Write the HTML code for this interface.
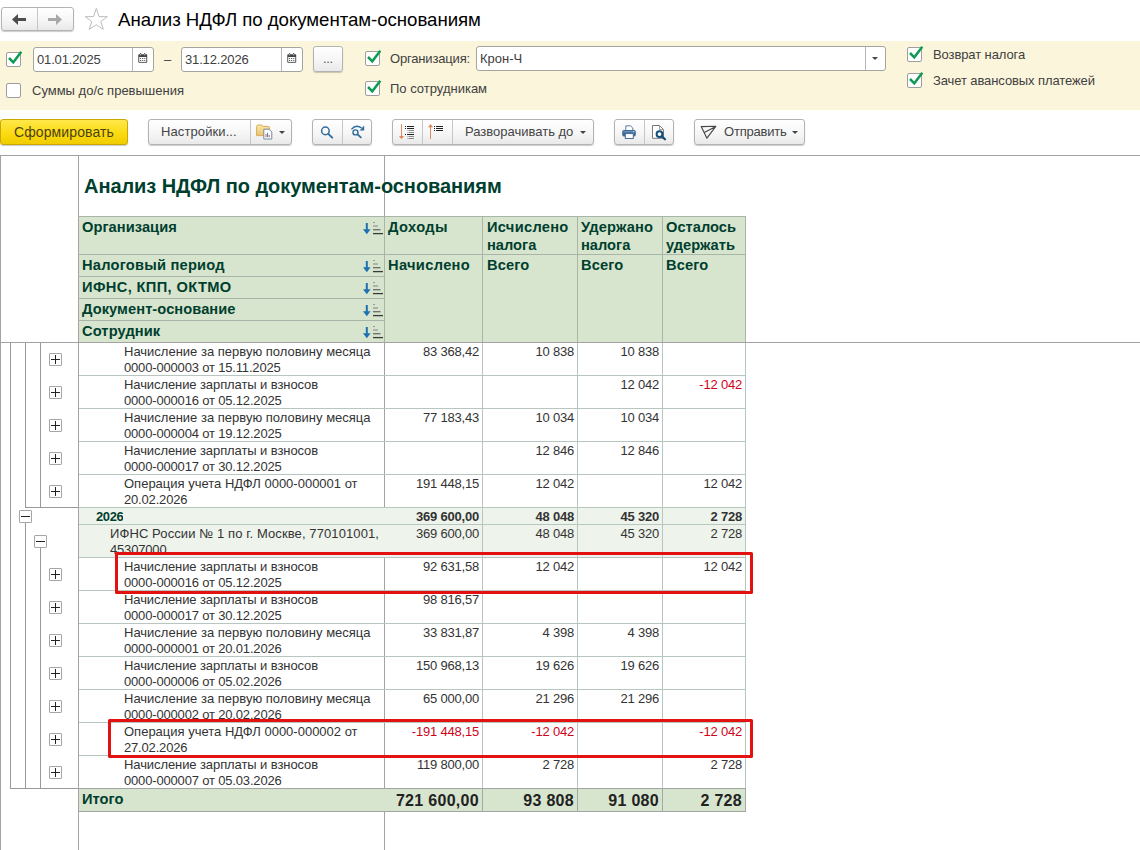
<!DOCTYPE html>
<html><head><meta charset="utf-8">
<style>
*{box-sizing:border-box;margin:0;padding:0}
html,body{width:1140px;height:850px;overflow:hidden;background:#fff}
body{font-family:"Liberation Sans",sans-serif;font-size:13px;color:#404040;position:relative}
.a{position:absolute}
.t{position:absolute;white-space:nowrap;line-height:16px}
.btn{position:absolute;border:1px solid #b3b3b3;border-radius:3px;background:linear-gradient(#ffffff,#f6f6f6 55%,#e9e9e9);box-shadow:0 1px 1px rgba(0,0,0,.2)}
.sep{position:absolute;width:1px;background:#c6c6c6}
.inp{position:absolute;border:1px solid #a5a5a0;border-radius:3px;background:#fff}
.cb{position:absolute;width:15px;height:15px;border:1px solid #9e9e9e;border-radius:2px;background:#fff}
.ck{position:absolute;width:18px;height:20px;overflow:visible}
.dd{position:absolute;width:0;height:0;border-left:3px solid transparent;border-right:3px solid transparent;border-top:3px solid #444}
.vl{position:absolute;width:1px;background:#a3a3a3}
.hl{position:absolute;height:1px;background:#a3a3a3}
.gl{position:absolute;background:#b7c7c0}
.hd{position:absolute;font-weight:bold;font-size:14.67px;line-height:18px;color:#003f2f;white-space:nowrap}
.d{position:absolute;left:124px;line-height:16px;white-space:nowrap;color:#333}
.n{position:absolute;text-align:right;line-height:16px;white-space:nowrap;color:#333;letter-spacing:-.2px}
.r{color:#d0021b}
.ls{letter-spacing:-.17px}
.pm{position:absolute;width:13px;height:13px;border:1px solid #a6a6a6;border-radius:1px;background:#fff}
.pm:before{content:"";position:absolute;left:1px;top:5px;width:9px;height:1px;background:#222}
.pl:after{content:"";position:absolute;left:5px;top:1px;width:1px;height:9px;background:#222}
.red{position:absolute;border:3px solid #e31110;border-radius:1.5px}
</style></head><body>
<!-- ===== top nav ===== -->
<div class="btn" style="left:1px;top:7px;width:73px;height:24px"></div>
<div class="sep" style="left:37px;top:8px;height:22px"></div>
<svg class="a" style="left:10px;top:12px" width="18" height="15" viewBox="0 0 18 15"><path d="M2 7.5 L8 2 V6 H16 V9 H8 V13 Z" fill="#4d4d4d"/></svg>
<svg class="a" style="left:46px;top:12px" width="18" height="15" viewBox="0 0 18 15"><path d="M16 7.5 L10 2 V6 H2 V9 H10 V13 Z" fill="#a8a8a8"/></svg>
<svg class="a" style="left:83px;top:7px" width="26" height="25" viewBox="0 0 26 25"><path d="M13.3 1.4 L16 9.6 L24.3 9.7 L17.8 14.6 L20.3 22.3 L13.3 17.8 L6.3 22.3 L8.8 14.6 L2.3 9.7 L10.6 9.6 Z" fill="#fff" stroke="#bcbcbc" stroke-width="1" stroke-linejoin="miter"/></svg>
<div class="t" style="left:118px;top:9px;font-size:18.67px;line-height:22px;color:#000;letter-spacing:-.05px">Анализ НДФЛ по документам-основаниям</div>

<!-- ===== yellow panel ===== -->
<div class="a" style="left:0;top:41px;width:1140px;height:69px;background:#fbf6db"></div>

<div class="cb" style="left:6px;top:52px"></div>
<svg class="ck" style="left:6px;top:48px"><path d="M3 10 L7.3 14.3 L15.3 3.7" fill="none" stroke="#0f9a55" stroke-width="2.5"/></svg>
<div class="inp" style="left:33px;top:47px;width:121px;height:25px"></div>
<div class="sep" style="left:132px;top:48px;height:23px;background:#b5b5b5"></div>
<div class="t" style="left:37px;top:52px;letter-spacing:-.15px">01.01.2025</div>
<svg class="a" style="left:138px;top:53px" width="10" height="10"><path d="M0.3 2 Q0.3 1.2 1.1 1.2 H8.4 Q9.2 1.2 9.2 2 V9 Q9.2 9.8 8.4 9.8 H1.1 Q0.3 9.8 0.3 9 Z" fill="#444"/><rect x="1.2" y="4" width="7.1" height="4.9" fill="#fff"/><rect x="2.1" y="0" width="1" height="2.2" fill="#444"/><rect x="6.2" y="0" width="1" height="2.2" fill="#444"/><rect x="2.2" y="1.3" width=".8" height="1" fill="#fff"/><rect x="6.3" y="1.3" width=".8" height="1" fill="#fff"/>
<rect x="2.1" y="5" width="1" height="1" fill="#444"/><rect x="4.2" y="5" width="1" height="1" fill="#444"/><rect x="6.3" y="5" width="1" height="1" fill="#444"/><rect x="2.1" y="7" width="1" height="1" fill="#444"/><rect x="4.2" y="7" width="1" height="1" fill="#444"/><rect x="6.3" y="7" width="1" height="1" fill="#444"/></svg>
<div class="t" style="left:164px;top:52px">–</div>
<div class="inp" style="left:181px;top:47px;width:122px;height:25px"></div>
<div class="sep" style="left:281px;top:48px;height:23px;background:#b5b5b5"></div>
<div class="t" style="left:185px;top:52px;letter-spacing:-.15px">31.12.2026</div>
<svg class="a" style="left:287px;top:53px" width="10" height="10"><path d="M0.3 2 Q0.3 1.2 1.1 1.2 H8.4 Q9.2 1.2 9.2 2 V9 Q9.2 9.8 8.4 9.8 H1.1 Q0.3 9.8 0.3 9 Z" fill="#444"/><rect x="1.2" y="4" width="7.1" height="4.9" fill="#fff"/><rect x="2.1" y="0" width="1" height="2.2" fill="#444"/><rect x="6.2" y="0" width="1" height="2.2" fill="#444"/><rect x="2.2" y="1.3" width=".8" height="1" fill="#fff"/><rect x="6.3" y="1.3" width=".8" height="1" fill="#fff"/>
<rect x="2.1" y="5" width="1" height="1" fill="#444"/><rect x="4.2" y="5" width="1" height="1" fill="#444"/><rect x="6.3" y="5" width="1" height="1" fill="#444"/><rect x="2.1" y="7" width="1" height="1" fill="#444"/><rect x="4.2" y="7" width="1" height="1" fill="#444"/><rect x="6.3" y="7" width="1" height="1" fill="#444"/></svg>
<div class="btn" style="left:313px;top:46px;width:30px;height:26px"></div>
<div class="t" style="left:323px;top:51px;color:#555;letter-spacing:-.3px">...</div>

<div class="cb" style="left:6px;top:83px"></div>
<div class="t" style="left:32px;top:83px">Суммы до/с превышения</div>

<div class="cb" style="left:365px;top:51px"></div>
<svg class="ck" style="left:365px;top:47px"><path d="M3 10 L7.3 14.3 L15.3 3.7" fill="none" stroke="#0f9a55" stroke-width="2.5"/></svg>
<div class="t" style="left:390px;top:51px;letter-spacing:-.17px">Организация:</div>
<div class="inp" style="left:476px;top:46px;width:410px;height:25px"></div>
<div class="sep" style="left:865px;top:47px;height:23px;background:#b5b5b5"></div>
<div class="t" style="left:480px;top:51px">Крон-Ч</div>
<div class="dd" style="left:872px;top:57px"></div>

<div class="cb" style="left:365px;top:81px"></div>
<svg class="ck" style="left:365px;top:77px"><path d="M3 10 L7.3 14.3 L15.3 3.7" fill="none" stroke="#0f9a55" stroke-width="2.5"/></svg>
<div class="t" style="left:390px;top:81px">По сотрудникам</div>

<div class="cb" style="left:907px;top:47px"></div>
<svg class="ck" style="left:907px;top:43px"><path d="M3 10 L7.3 14.3 L15.3 3.7" fill="none" stroke="#0f9a55" stroke-width="2.5"/></svg>
<div class="t" style="left:933px;top:47px;letter-spacing:-.1px">Возврат налога</div>
<div class="cb" style="left:907px;top:73px"></div>
<svg class="ck" style="left:907px;top:69px"><path d="M3 10 L7.3 14.3 L15.3 3.7" fill="none" stroke="#0f9a55" stroke-width="2.5"/></svg>
<div class="t" style="left:933px;top:73px;letter-spacing:-.1px">Зачет авансовых платежей</div>

<!-- ===== toolbar ===== -->
<div class="btn" style="left:0;top:119px;width:128px;height:26px;border-color:#c9a800;background:linear-gradient(#ffe84a,#fbdb12 55%,#f0cc00)"></div>
<div class="t" style="left:14px;top:124px;font-size:14px;color:#4d4214;letter-spacing:.1px">Сформировать</div>

<div class="btn" style="left:148px;top:119px;width:144px;height:26px"></div>
<div class="sep" style="left:250px;top:120px;height:24px"></div>
<div class="t" style="left:161px;top:124px;color:#444;letter-spacing:.1px">Настройки...</div>
<svg class="a" style="left:256px;top:123px" width="18" height="18" viewBox="0 0 18 18">
<defs><linearGradient id="fg" x1="0" y1="0" x2="0" y2="1"><stop offset="0" stop-color="#fbe9a8"/><stop offset="1" stop-color="#e9c46e"/></linearGradient></defs>
<path d="M.6 3.6 Q.6 2 2.2 2 H5.3 Q6.3 2 6.8 3.4 H12.2 Q13.6 3.4 13.6 4.8 V12.6 H.6 Z" fill="url(#fg)" stroke="#d8ae57" stroke-width="1"/>
<path d="M7.8 6.2 H13 L15.8 9 V16 H7.8 Z" fill="#fff" stroke="#6f8ba6" stroke-width="1"/>
<path d="M10 14.2 V11.2 M13.2 14.2 V12" stroke="#d9534f" stroke-width="1" fill="none"/>
<path d="M11.6 14.2 V9.8" stroke="#3a78b5" stroke-width="1"/>
</svg>
<div class="dd" style="left:279px;top:131px"></div>

<div class="btn" style="left:312px;top:119px;width:60px;height:26px"></div>
<div class="sep" style="left:342px;top:120px;height:24px"></div>
<svg class="a" style="left:319px;top:124px" width="16" height="16" viewBox="0 0 16 16"><circle cx="6.4" cy="6.9" r="3.8" fill="none" stroke="#2f6c9e" stroke-width="1.5"/><path d="M9.3 9.8 L13.2 13.7" stroke="#2f6c9e" stroke-width="1.9" stroke-linecap="round"/></svg>
<svg class="a" style="left:349px;top:123px" width="17" height="17" viewBox="0 0 17 17"><circle cx="6.5" cy="9.4" r="2.5" fill="none" stroke="#2f6c9e" stroke-width="1.4"/><path d="M8.5 11.4 L11.8 14.4" stroke="#2f6c9e" stroke-width="1.8" stroke-linecap="round"/><path d="M2.4 6.4 Q7 0.8 12.6 5" fill="none" stroke="#2f6c9e" stroke-width="1.4"/><path d="M15.2 2.6 V7.4 H10.6 Z" fill="#2f6c9e"/></svg>

<div class="btn" style="left:392px;top:119px;width:202px;height:26px"></div>
<div class="sep" style="left:422px;top:120px;height:24px"></div>
<div class="sep" style="left:452px;top:120px;height:24px"></div>
<svg class="a" style="left:397px;top:123px" width="20" height="18" viewBox="0 0 20 18"><rect x="4" y="1" width="1" height="13" fill="#e08b5e"/><path d="M2 13 H7 L4.5 16.2 Z" fill="#e0875a"/><rect x="8" y="3" width="1" height="1" fill="#222"/><rect x="10" y="3" width="7" height="1" fill="#222"/><rect x="8" y="5" width="1" height="1" fill="#222"/><rect x="10" y="5" width="7" height="1" fill="#222"/><rect x="10.5" y="7" width="1" height="1" fill="#8a8a8a"/><rect x="12" y="7" width="5" height="1" fill="#8a8a8a"/><rect x="10.5" y="9" width="1" height="1" fill="#8a8a8a"/><rect x="12" y="9" width="5" height="1" fill="#8a8a8a"/><rect x="8" y="11" width="1" height="1" fill="#222"/><rect x="10" y="11" width="7" height="1" fill="#222"/><rect x="10.5" y="13" width="1" height="1" fill="#8a8a8a"/><rect x="12" y="13" width="5" height="1" fill="#8a8a8a"/><rect x="10.5" y="15" width="1" height="1" fill="#8a8a8a"/><rect x="12" y="15" width="5" height="1" fill="#8a8a8a"/></svg>
<svg class="a" style="left:426px;top:123px" width="20" height="18" viewBox="0 0 20 18"><rect x="4" y="3" width="1" height="13" fill="#e08b5e"/><path d="M2 4.3 H7 L4.5 1 Z" fill="#e0875a"/><rect x="8" y="3" width="1" height="1" fill="#222"/><rect x="10" y="3" width="7" height="1" fill="#222"/><rect x="8" y="5" width="1" height="1" fill="#222"/><rect x="10" y="5" width="7" height="1" fill="#222"/><rect x="8" y="7" width="1" height="1" fill="#222"/><rect x="10" y="7" width="7" height="1" fill="#222"/></svg>
<div class="t" style="left:465px;top:124px;color:#444">Разворачивать до</div>
<div class="dd" style="left:580px;top:131px"></div>

<div class="btn" style="left:614px;top:119px;width:60px;height:26px"></div>
<div class="sep" style="left:644px;top:120px;height:24px"></div>
<svg class="a" style="left:621px;top:124px" width="17" height="16" viewBox="0 0 17 16"><path d="M4.8 6 V1.8 H9.5 L11.8 4 V6" fill="#fff" stroke="#5b7da3" stroke-width="1"/><rect x="1.2" y="6" width="13.6" height="6.6" rx="1.8" fill="#3f6893"/><rect x="2.2" y="7" width="11.6" height="1.2" rx=".6" fill="#6d93bb"/><rect x="12" y="7.2" width="1" height="1" fill="#dfe9f3"/><rect x="4.3" y="9.6" width="8" height="4.9" fill="#fff" stroke="#4a6f99" stroke-width="1"/></svg>
<svg class="a" style="left:650px;top:123px" width="18" height="18" viewBox="0 0 18 18"><path d="M2.5 2.5 H9.5 L13.5 6.5 V15.3 H2.5 Z" fill="#fff" stroke="#7a7a7a" stroke-width="1"/><path d="M9.5 2.5 V6.5 H13.5" fill="none" stroke="#9a9a9a" stroke-width="1"/><circle cx="9.5" cy="11.1" r="2.9" fill="#fff" stroke="#0f4c7c" stroke-width="2"/><path d="M11.8 13.4 L15 16.3" stroke="#0f4c7c" stroke-width="2.2" stroke-linecap="round"/></svg>

<div class="btn" style="left:694px;top:119px;width:111px;height:26px"></div>
<svg class="a" style="left:700px;top:125px" width="19" height="15" viewBox="0 0 19 15"><path d="M1.2 1.6 L15.8 1.3 L6.9 13.2 Z M4.3 7.4 L15.3 1.8" fill="none" stroke="#484848" stroke-width="1.15" stroke-linejoin="round" stroke-linecap="round"/></svg>
<div class="t" style="left:724px;top:124px;color:#444;letter-spacing:-.2px">Отправить</div>
<div class="dd" style="left:792px;top:131px"></div>

<!-- ===== sheet ===== -->
<div class="hl" style="left:0;top:155px;width:1140px"></div>
<div class="vl" style="left:0;top:155px;height:695px"></div>
<div class="vl" style="left:78px;top:155px;height:695px"></div>
<div class="vl" style="left:384px;top:155px;height:695px"></div>
<div class="hl" style="left:0;top:342px;width:1140px"></div>

<div class="t" style="left:84px;top:174px;font-size:20px;font-weight:bold;line-height:24px;color:#003f2f;letter-spacing:-.06px">Анализ НДФЛ по документам-основаниям</div>

<div id="sheet">
<div class="a" style="left:79px;top:216px;width:666px;height:126px;background:#d8e5ce"></div>
<div class="a" style="left:78px;top:216px;width:668px;height:1px;background:#a9b5a9"></div>
<div class="a" style="left:78px;top:254px;width:668px;height:1px;background:#a9b5a9"></div>
<div class="a" style="left:78px;top:276px;width:306px;height:1px;background:#a9b5a9"></div>
<div class="a" style="left:78px;top:298px;width:306px;height:1px;background:#a9b5a9"></div>
<div class="a" style="left:78px;top:320px;width:306px;height:1px;background:#a9b5a9"></div>
<div class="a" style="left:384px;top:216px;width:1px;height:126px;background:#a9b5a9"></div>
<div class="a" style="left:482px;top:216px;width:1px;height:126px;background:#a9b5a9"></div>
<div class="a" style="left:577px;top:216px;width:1px;height:126px;background:#a9b5a9"></div>
<div class="a" style="left:662px;top:216px;width:1px;height:126px;background:#a9b5a9"></div>
<div class="a" style="left:745px;top:216px;width:1px;height:126px;background:#a9b5a9"></div>
<div class="hd" style="left:82px;top:218px;letter-spacing:0.05px">Организация</div>
<svg class="a" style="left:362px;top:221px" width="22" height="14" viewBox="0 0 22 14"><path d="M4.8 2 V11" stroke="#1f6fb3" stroke-width="2" fill="none"/><path d="M1 8.2 H8.6 L4.8 13.2 Z" fill="#1f6fb3"/><path d="M11 1.5 H13" stroke="#9a9a9a" stroke-width="1"/><path d="M11 5 H16" stroke="#8a8a8a" stroke-width="1.1"/><path d="M11 8.7 H18.5" stroke="#6a6a6a" stroke-width="1.3"/><path d="M11 12.6 H21" stroke="#3a3a3a" stroke-width="1.3"/></svg>
<div class="hd" style="left:82px;top:256px;letter-spacing:0.22px">Налоговый период</div>
<svg class="a" style="left:362px;top:259px" width="22" height="14" viewBox="0 0 22 14"><path d="M4.8 2 V11" stroke="#1f6fb3" stroke-width="2" fill="none"/><path d="M1 8.2 H8.6 L4.8 13.2 Z" fill="#1f6fb3"/><path d="M11 1.5 H13" stroke="#9a9a9a" stroke-width="1"/><path d="M11 5 H16" stroke="#8a8a8a" stroke-width="1.1"/><path d="M11 8.7 H18.5" stroke="#6a6a6a" stroke-width="1.3"/><path d="M11 12.6 H21" stroke="#3a3a3a" stroke-width="1.3"/></svg>
<div class="hd" style="left:82px;top:278px;letter-spacing:0.36px">ИФНС, КПП, ОКТМО</div>
<svg class="a" style="left:362px;top:281px" width="22" height="14" viewBox="0 0 22 14"><path d="M4.8 2 V11" stroke="#1f6fb3" stroke-width="2" fill="none"/><path d="M1 8.2 H8.6 L4.8 13.2 Z" fill="#1f6fb3"/><path d="M11 1.5 H13" stroke="#9a9a9a" stroke-width="1"/><path d="M11 5 H16" stroke="#8a8a8a" stroke-width="1.1"/><path d="M11 8.7 H18.5" stroke="#6a6a6a" stroke-width="1.3"/><path d="M11 12.6 H21" stroke="#3a3a3a" stroke-width="1.3"/></svg>
<div class="hd" style="left:82px;top:300px;letter-spacing:0.06px">Документ-основание</div>
<svg class="a" style="left:362px;top:303px" width="22" height="14" viewBox="0 0 22 14"><path d="M4.8 2 V11" stroke="#1f6fb3" stroke-width="2" fill="none"/><path d="M1 8.2 H8.6 L4.8 13.2 Z" fill="#1f6fb3"/><path d="M11 1.5 H13" stroke="#9a9a9a" stroke-width="1"/><path d="M11 5 H16" stroke="#8a8a8a" stroke-width="1.1"/><path d="M11 8.7 H18.5" stroke="#6a6a6a" stroke-width="1.3"/><path d="M11 12.6 H21" stroke="#3a3a3a" stroke-width="1.3"/></svg>
<div class="hd" style="left:82px;top:322px;letter-spacing:0.1px">Сотрудник</div>
<svg class="a" style="left:362px;top:325px" width="22" height="14" viewBox="0 0 22 14"><path d="M4.8 2 V11" stroke="#1f6fb3" stroke-width="2" fill="none"/><path d="M1 8.2 H8.6 L4.8 13.2 Z" fill="#1f6fb3"/><path d="M11 1.5 H13" stroke="#9a9a9a" stroke-width="1"/><path d="M11 5 H16" stroke="#8a8a8a" stroke-width="1.1"/><path d="M11 8.7 H18.5" stroke="#6a6a6a" stroke-width="1.3"/><path d="M11 12.6 H21" stroke="#3a3a3a" stroke-width="1.3"/></svg>
<div class="hd" style="left:388px;top:218px"><span style="letter-spacing:.4px">Доходы</span></div>
<div class="hd" style="left:388px;top:256px"><span style="letter-spacing:.33px">Начислено</span></div>
<div class="hd" style="left:487px;top:218px"><span style="letter-spacing:.28px">Исчислено</span><br>налога</div>
<div class="hd" style="left:487px;top:256px"><span style="letter-spacing:.1px">Всего</span></div>
<div class="hd" style="left:581px;top:218px"><span style="letter-spacing:.13px">Удержано</span><br>налога</div>
<div class="hd" style="left:581px;top:256px"><span style="letter-spacing:.1px">Всего</span></div>
<div class="hd" style="left:666px;top:218px">Осталось<br>удержать</div>
<div class="hd" style="left:666px;top:256px"><span style="letter-spacing:.1px">Всего</span></div>
<div class="d" style="left:124px;top:344px;height:31px;overflow:hidden">Начисление за первую половину месяца<br><span class="ls">0000-000003 от 15.11.2025</span></div>
<div class="n" style="left:384px;width:95px;top:344px">83 368,42</div>
<div class="n" style="left:482px;width:92px;top:344px">10 838</div>
<div class="n" style="left:577px;width:82px;top:344px">10 838</div>
<div class="d" style="left:124px;top:377px;height:31px;overflow:hidden"><span style="letter-spacing:-.09px">Начисление зарплаты и взносов</span><br><span class="ls">0000-000016 от 05.12.2025</span></div>
<div class="n" style="left:577px;width:82px;top:377px">12 042</div>
<div class="n r" style="left:662px;width:80px;top:377px">-12 042</div>
<div class="d" style="left:124px;top:410px;height:31px;overflow:hidden">Начисление за первую половину месяца<br><span class="ls">0000-000004 от 19.12.2025</span></div>
<div class="n" style="left:384px;width:95px;top:410px">77 183,43</div>
<div class="n" style="left:482px;width:92px;top:410px">10 034</div>
<div class="n" style="left:577px;width:82px;top:410px">10 034</div>
<div class="d" style="left:124px;top:443px;height:31px;overflow:hidden"><span style="letter-spacing:-.09px">Начисление зарплаты и взносов</span><br><span class="ls">0000-000017 от 30.12.2025</span></div>
<div class="n" style="left:482px;width:92px;top:443px">12 846</div>
<div class="n" style="left:577px;width:82px;top:443px">12 846</div>
<div class="d" style="left:124px;top:476px;height:31px;overflow:hidden">Операция учета НДФЛ 0000-000001 от<br><span class="ls">20.02.2026</span></div>
<div class="n" style="left:384px;width:95px;top:476px">191 448,15</div>
<div class="n" style="left:482px;width:92px;top:476px">12 042</div>
<div class="n" style="left:662px;width:80px;top:476px">12 042</div>
<div class="a" style="left:79px;top:508px;width:666px;height:16px;background:#eef3ec"></div>
<div class="d" style="left:96px;top:509px;height:15px;overflow:hidden;font-weight:bold;color:#003f2f;letter-spacing:-.4px">2026</div>
<div class="n" style="left:384px;width:95px;top:509px;font-weight:bold">369 600,00</div>
<div class="n" style="left:482px;width:92px;top:509px;font-weight:bold">48 048</div>
<div class="n" style="left:577px;width:82px;top:509px;font-weight:bold">45 320</div>
<div class="n" style="left:662px;width:80px;top:509px;font-weight:bold">2 728</div>
<div class="a" style="left:79px;top:525px;width:666px;height:32px;background:#eef3ec"></div>
<div class="d" style="left:110px;top:526px;height:31px;overflow:hidden"><span style="letter-spacing:.1px">ИФНС России № 1 по г. Москве, 770101001,</span><br><span class="ls">45307000</span></div>
<div class="n" style="left:384px;width:95px;top:526px">369 600,00</div>
<div class="n" style="left:482px;width:92px;top:526px">48 048</div>
<div class="n" style="left:577px;width:82px;top:526px">45 320</div>
<div class="n" style="left:662px;width:80px;top:526px">2 728</div>
<div class="d" style="left:124px;top:559px;height:31px;overflow:hidden"><span style="letter-spacing:-.09px">Начисление зарплаты и взносов</span><br><span class="ls">0000-000016 от 05.12.2025</span></div>
<div class="n" style="left:384px;width:95px;top:559px">92 631,58</div>
<div class="n" style="left:482px;width:92px;top:559px">12 042</div>
<div class="n" style="left:662px;width:80px;top:559px">12 042</div>
<div class="d" style="left:124px;top:592px;height:31px;overflow:hidden"><span style="letter-spacing:-.09px">Начисление зарплаты и взносов</span><br><span class="ls">0000-000017 от 30.12.2025</span></div>
<div class="n" style="left:384px;width:95px;top:592px">98 816,57</div>
<div class="d" style="left:124px;top:625px;height:31px;overflow:hidden">Начисление за первую половину месяца<br><span class="ls">0000-000001 от 20.01.2026</span></div>
<div class="n" style="left:384px;width:95px;top:625px">33 831,87</div>
<div class="n" style="left:482px;width:92px;top:625px">4 398</div>
<div class="n" style="left:577px;width:82px;top:625px">4 398</div>
<div class="d" style="left:124px;top:658px;height:31px;overflow:hidden"><span style="letter-spacing:-.09px">Начисление зарплаты и взносов</span><br><span class="ls">0000-000006 от 05.02.2026</span></div>
<div class="n" style="left:384px;width:95px;top:658px">150 968,13</div>
<div class="n" style="left:482px;width:92px;top:658px">19 626</div>
<div class="n" style="left:577px;width:82px;top:658px">19 626</div>
<div class="d" style="left:124px;top:691px;height:31px;overflow:hidden">Начисление за первую половину месяца<br><span class="ls">0000-000002 от 20.02.2026</span></div>
<div class="n" style="left:384px;width:95px;top:691px">65 000,00</div>
<div class="n" style="left:482px;width:92px;top:691px">21 296</div>
<div class="n" style="left:577px;width:82px;top:691px">21 296</div>
<div class="d" style="left:124px;top:724px;height:31px;overflow:hidden">Операция учета НДФЛ 0000-000002 от<br><span class="ls">27.02.2026</span></div>
<div class="n r" style="left:384px;width:95px;top:724px">-191 448,15</div>
<div class="n r" style="left:482px;width:92px;top:724px">-12 042</div>
<div class="n r" style="left:662px;width:80px;top:724px">-12 042</div>
<div class="d" style="left:124px;top:757px;height:31px;overflow:hidden"><span style="letter-spacing:-.09px">Начисление зарплаты и взносов</span><br><span class="ls">0000-000007 от 05.03.2026</span></div>
<div class="n" style="left:384px;width:95px;top:757px">119 800,00</div>
<div class="n" style="left:482px;width:92px;top:757px">2 728</div>
<div class="n" style="left:662px;width:80px;top:757px">2 728</div>
<div class="a" style="left:79px;top:789px;width:666px;height:22px;background:#d8e5ce"></div>
<div class="hd" style="left:82px;top:790px">Итого</div>
<div class="n" style="left:384px;width:95px;top:791px;font-size:16px;font-weight:bold;line-height:19px;color:#222;letter-spacing:.3px">721 600,00</div>
<div class="n" style="left:482px;width:92px;top:791px;font-size:16px;font-weight:bold;line-height:19px;color:#222;letter-spacing:.3px">93 808</div>
<div class="n" style="left:577px;width:82px;top:791px;font-size:16px;font-weight:bold;line-height:19px;color:#222;letter-spacing:.3px">91 080</div>
<div class="n" style="left:662px;width:80px;top:791px;font-size:16px;font-weight:bold;line-height:19px;color:#222;letter-spacing:.3px">2 728</div>
<div class="gl" style="left:79px;top:375px;width:667px;height:1px"></div>
<div class="gl" style="left:79px;top:408px;width:667px;height:1px"></div>
<div class="gl" style="left:79px;top:441px;width:667px;height:1px"></div>
<div class="gl" style="left:79px;top:474px;width:667px;height:1px"></div>
<div class="gl" style="left:79px;top:507px;width:667px;height:1px"></div>
<div class="gl" style="left:79px;top:524px;width:667px;height:1px"></div>
<div class="gl" style="left:79px;top:557px;width:667px;height:1px"></div>
<div class="gl" style="left:79px;top:590px;width:667px;height:1px"></div>
<div class="gl" style="left:79px;top:623px;width:667px;height:1px"></div>
<div class="gl" style="left:79px;top:656px;width:667px;height:1px"></div>
<div class="gl" style="left:79px;top:689px;width:667px;height:1px"></div>
<div class="gl" style="left:79px;top:722px;width:667px;height:1px"></div>
<div class="gl" style="left:79px;top:755px;width:667px;height:1px"></div>
<div class="gl" style="left:79px;top:788px;width:667px;height:1px"></div>
<div class="gl" style="left:79px;top:811px;width:667px;height:1px"></div>
<div class="gl" style="left:482px;top:343px;width:1px;height:469px"></div>
<div class="gl" style="left:577px;top:343px;width:1px;height:469px"></div>
<div class="gl" style="left:662px;top:343px;width:1px;height:469px"></div>
<div class="gl" style="left:745px;top:343px;width:1px;height:469px"></div>
<div class="a" style="left:78px;top:788px;width:668px;height:1px;background:#a0a59f"></div>
<div class="a" style="left:78px;top:811px;width:668px;height:1px;background:#a0a59f"></div>
<div class="a" style="left:482px;top:788px;width:1px;height:24px;background:#a4aaa3"></div>
<div class="a" style="left:577px;top:788px;width:1px;height:24px;background:#a4aaa3"></div>
<div class="a" style="left:662px;top:788px;width:1px;height:24px;background:#a4aaa3"></div>
<div class="a" style="left:745px;top:788px;width:1px;height:24px;background:#a4aaa3"></div>
<div class="a" style="left:10px;top:343px;width:1px;height:445px;background:#999"></div>
<div class="a" style="left:10px;top:788px;width:68px;height:1px;background:#999"></div>
<div class="a" style="left:25px;top:343px;width:1px;height:164px;background:#999"></div>
<div class="a" style="left:40px;top:343px;width:1px;height:164px;background:#999"></div>
<div class="a" style="left:25px;top:507px;width:53px;height:1px;background:#999"></div>
<div class="a" style="left:25px;top:523px;width:1px;height:265px;background:#999"></div>
<div class="a" style="left:40px;top:548px;width:1px;height:240px;background:#999"></div>
<div class="pm" style="left:19px;top:510px"></div>
<div class="pm" style="left:34px;top:535px"></div>
<div class="pm pl" style="left:49px;top:353px"></div>
<div class="pm pl" style="left:49px;top:386px"></div>
<div class="pm pl" style="left:49px;top:419px"></div>
<div class="pm pl" style="left:49px;top:452px"></div>
<div class="pm pl" style="left:49px;top:485px"></div>
<div class="pm pl" style="left:49px;top:568px"></div>
<div class="pm pl" style="left:49px;top:601px"></div>
<div class="pm pl" style="left:49px;top:634px"></div>
<div class="pm pl" style="left:49px;top:667px"></div>
<div class="pm pl" style="left:49px;top:700px"></div>
<div class="pm pl" style="left:49px;top:733px"></div>
<div class="pm pl" style="left:49px;top:766px"></div>
<div class="red" style="left:115px;top:552px;width:638px;height:42px"></div>
<div class="red" style="left:108px;top:719px;width:645px;height:39px"></div>
</div><!--/sheet-->
</body></html>
